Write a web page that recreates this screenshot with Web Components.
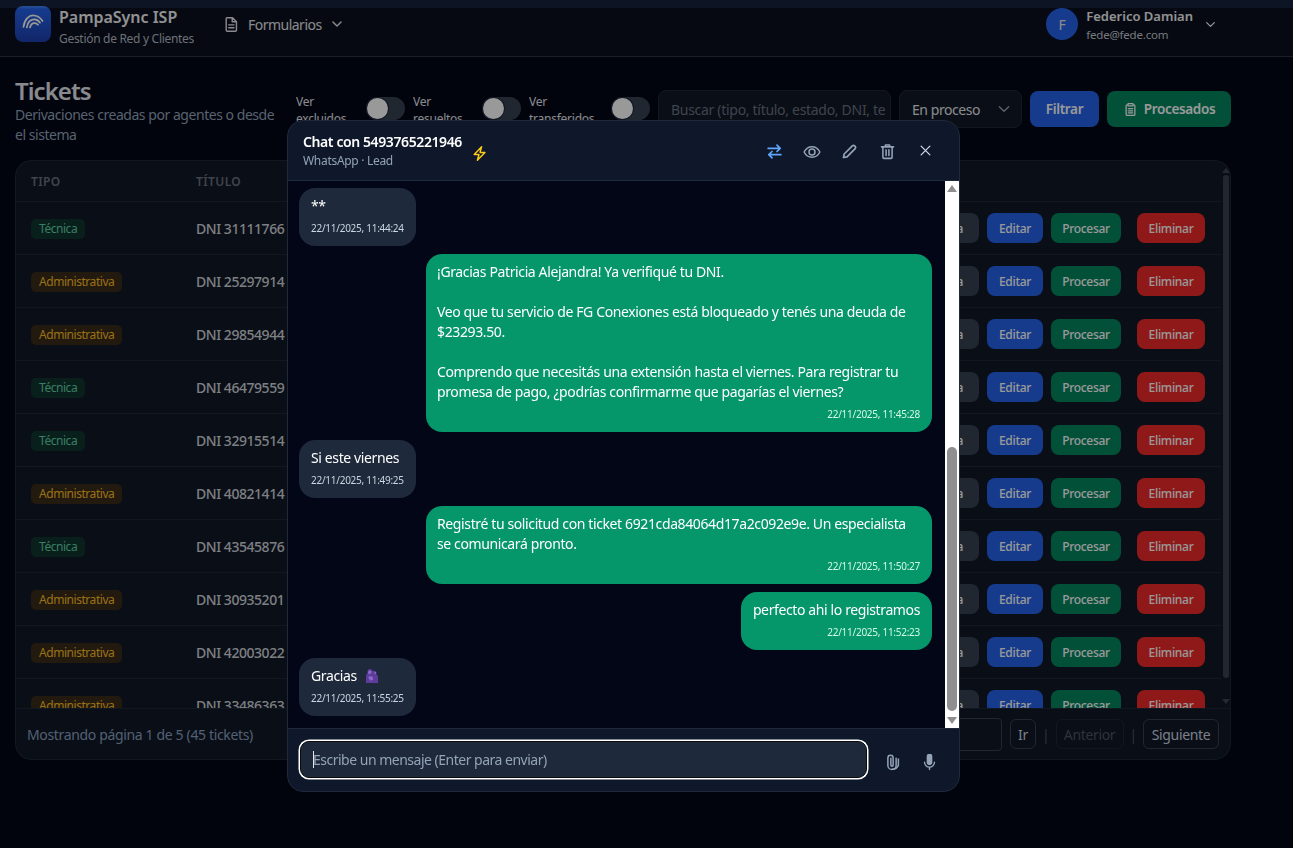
<!DOCTYPE html>
<html lang="es">
<head>
<meta charset="utf-8">
<title>Tickets</title>
<style>
  html, body { margin: 0; height: 100%; background: #020617; overflow: hidden; }
  body { font-family: "Noto Sans", "Open Sans", sans-serif; font-size: 14px; color: #e5e7eb; }
</style>
</head>
<body>
<app-header></app-header>
<tickets-page></tickets-page>
<modal-scrim></modal-scrim>
<chat-modal title="Chat con 5493765221946" subtitle="WhatsApp · Lead">
  <chat-bubble time="22/11/2025, 11:44:24">**</chat-bubble>
  <chat-bubble side="out" wide time="22/11/2025, 11:45:28">¡Gracias Patricia Alejandra! Ya verifiqué tu DNI.<br><br>Veo que tu servicio de FG Conexiones está bloqueado y tenés una deuda de<br>$23293.50.<br><br>Comprendo que necesitás una extensión hasta el viernes. Para registrar tu<br>promesa de pago, ¿podrías confirmarme que pagarías el viernes?</chat-bubble>
  <chat-bubble time="22/11/2025, 11:49:25">Si este viernes</chat-bubble>
  <chat-bubble side="out" wide time="22/11/2025, 11:50:27">Registré tu solicitud con ticket 6921cda84064d17a2c092e9e. Un especialista<br>se comunicará pronto.</chat-bubble>
  <chat-bubble side="out" time="22/11/2025, 11:52:23">perfecto ahi lo registramos</chat-bubble>
  <chat-bubble time="22/11/2025, 11:55:25">Gracias <svg width="13" height="16" viewBox="0 0 13 16" style="vertical-align:-3px;margin-left:5px"><path fill="#5d3c9c" d="M1 15V8c0-1 .5-2 1.500-2.500C2 3 3 1 5 1c1.500 0 2.500 1 2.700 2.200C8.500 2.500 10 2.500 11 3.500c.7.8.7 2 .2 2.800C12.300 7 13 8 13 9v6z"/><path fill="#8a68c8" d="M3 4.500c0-1.200 1-2 2-2s1.500.8 1.500 1.800S5.500 6 4.500 6 3 5.500 3 4.500zM3 9l3-1 2 1.500V12l-3 .5zM9.500 4H11v2H9.500z"/></svg></chat-bubble>
</chat-modal>

<script>
const FONT = '"Noto Sans", "Open Sans", sans-serif';

const icons = {
  doc: '<path d="M6 2.500h7.500L19 8v12a1.500 1.500 0 0 1-1.500 1.500h-11.500A1.500 1.500 0 0 1 4.500 20V4A1.500 1.500 0 0 1 6 2.500zM13 2.500V8h6M8 12.500h7.500M8 16.500h7.500"/>',
  chevron: '<path d="M5 8.500l7 7 7-7"/>',
  clipboard: '<path d="M8 4.500H6.500A1.500 1.500 0 0 0 5 6v14a1.500 1.500 0 0 0 1.500 1.500h11A1.500 1.500 0 0 0 19 20V6a1.500 1.500 0 0 0-1.500-1.500H16M8 2.500h8v3.500H8zM8.500 10.500h7M8.500 14h7M8.500 17.500h7"/>',
  swap: '<path d="M3 7.500h17M15.500 3L20 7.500 15.500 12M21 16.500H4M8.500 12L4 16.500 8.500 21"/>',
  eye: '<path d="M1.500 12C4 7 8 5 12 5s8 2 10.500 7C20 17 16 19 12 19s-8-2-10.500-7z"/><circle cx="12" cy="12" r="4"/>',
  pencil: '<path d="M3.500 20.500l1-5L16 4a2.200 2.200 0 0 1 3.100 0l.9.900a2.200 2.200 0 0 1 0 3.100L8.500 19.500z"/>',
  trash: '<path d="M3.500 5.500h17M9 5V2.800h6V5M5.500 5.500v14.700a1.500 1.500 0 0 0 1.500 1.500h10a1.500 1.500 0 0 0 1.500-1.500V5.500M10 9.500v8M14 9.500v8"/>',
  close: '<path d="M5 5l14 14M19 5L5 19"/>',
  clip: '<path d="M17.500 7v9.500a5.500 5.500 0 0 1-11 0V6.500a3.500 3.500 0 0 1 7 0v9.500a1.500 1.500 0 0 1-3 0V7"/><path d="M20.500 8v8.500a8.500 8.500 0 0 1-8 5"/>',
  mic: '<path fill="currentColor" d="M9 3.500a3 3 0 0 1 6 0v8a3 3 0 0 1-6 0z"/><path d="M5 11.500a7 7 0 0 0 14 0M12 18.500V22"/>',
  bolt: '<path d="M4.500 13.500L15 2.500l-2.300 8h7L9 21.500l2.300-8z"/>'
};

function icon(name, size, width) {
  return `<svg width="${size}" height="${size}" viewBox="0 0 24 24" fill="none" stroke="currentColor" stroke-width="${width || 2}" stroke-linecap="round" stroke-linejoin="round" style="display:block;flex:none">${icons[name]}</svg>`;
}

class AppHeader extends HTMLElement {
  constructor() {
    super();
    this.attachShadow({ mode: 'open' }).innerHTML = `
      <style>
        :host { display: flex; align-items: center; box-sizing: border-box; height: 57px; padding: 0 0 8px 15px;
          background: linear-gradient(#17233f 0 8px, #0a101d 8px); border-bottom: 1px solid #2a3445; color: #f3f4f6; }
        .logo { width: 36px; height: 36px; border-radius: 8px; background: linear-gradient(#3b82f6 0 1px, #2563eb 3px, #1e40af 100%); display: flex; align-items: center; justify-content: center; }
        .brand { margin-left: 8px; padding-top: 5px; }
        .name { font-size: 16px; font-weight: 600; line-height: 22px; letter-spacing: -.02px; }
        .tag { font-size: 12px; line-height: 16px; color: #b4bac4; margin-top: 3px; letter-spacing: -.3px; }
        .nav { display: flex; align-items: center; margin-left: 29px; color: #e5e7eb; }
        .nav span { margin: 0 8px 0 8px; font-size: 14px; letter-spacing: -.52px; }
        .user { margin-left: auto; display: flex; align-items: center; padding-right: 76px; }
        .avatar { width: 32px; height: 32px; border-radius: 50%; background: #2563eb; color: #e5e7eb; display: flex; align-items: center; justify-content: center; font-size: 14px; }
        .who { margin: 4px 11px 0 8px; }
        .who b { display: block; font-size: 13px; font-weight: 600; line-height: 18px; letter-spacing: 0; margin-top: -2px; }
        .who small { display: block; font-size: 11.500px; line-height: 16px; color: #c4c9d1; margin-top: 2px; letter-spacing: -.2px; }
      </style>
      <div class="logo"><svg width="24" height="24" viewBox="0 0 24 24" fill="none" stroke="#fff" stroke-width="1.700" stroke-linecap="round" style="margin-top:-7px"><path d="M2.500 18C3.500 10 8 6 13 6.500c3.500.3 6.500 2.300 8.500 5.500"/><path d="M5.800 18.500C6.500 13 10 10 13.500 10.300c2.500.2 4.300 1.500 5.500 3.400"/><path d="M9 18.500c.7-3 2.800-4.700 5-4.400 1.200.2 2.200.8 3 1.700"/></svg></div>
      <div class="brand"><div class="name">PampaSync ISP</div><div class="tag">Gestión de Red y Clientes</div></div>
      <div class="nav">${icon('doc', 17)}<span>Formularios</span>${icon('chevron', 14, 2.500)}</div>
      <div class="user">
        <div class="avatar">F</div>
        <div class="who"><b>Federico Damian</b><small>fede@fede.com</small></div>
        ${icon('chevron', 13, 2.500)}
      </div>`;
  }
}

class ToggleSwitch extends HTMLElement {
  constructor() {
    super();
    this.attachShadow({ mode: 'open' }).innerHTML = `
      <style>
        :host { display: flex; align-items: flex-start; gap: 8px; }
        .label { font-size: 12px; line-height: 17px; color: #e5e7eb; margin-top: 2.500px; letter-spacing: -.25px; white-space: pre-line; }
        .track { width: 39px; height: 23px; margin-top: 7px; border-radius: 12px; background: #374151; box-sizing: border-box; flex: none; }
        .knob { width: 21px; height: 21px; margin: 1px; border-radius: 50%; background: #fff; box-shadow: 0 0 0 1px #1e293b; }
      </style>
      <div class="label"></div><div class="track"><div class="knob"></div></div>`;
  }
  connectedCallback() {
    const label = this.shadowRoot.querySelector('.label');
    label.textContent = this.getAttribute('label');
    label.style.width = this.getAttribute('w') + 'px';
  }
}

class UiButton extends HTMLElement {
  constructor() {
    super();
    this.attachShadow({ mode: 'open' }).innerHTML = `
      <style>
        :host { display: inline-flex; align-items: center; justify-content: center; gap: 6px; box-sizing: border-box; border-radius: 8px; white-space: nowrap; font-weight: 600; color: #fff; flex: none; }
        :host([kind="blue"]) { background: #2563eb; }
        :host([kind="green"]) { background: #05865f; }
        :host([kind="red"]) { background: #ef2b2b; }
        :host([kind="grey"]) { background: #374151; }
      </style>
      <slot></slot>`;
  }
}

class TicketRow extends HTMLElement {
  constructor() {
    super();
    this.attachShadow({ mode: 'open' }).innerHTML = `
      <style>
        :host { display: flex; align-items: center; flex: none; box-sizing: border-box; height: 53px; padding-left: 15px; border-bottom: 1px solid #1f2937; }
        .tipo { width: 165px; flex: none; }
        .badge { display: inline-block; font-size: 12px; line-height: 20px; padding: 0 8px; border-radius: 5px; letter-spacing: -.45px; vertical-align: middle; }
        .badge.t { background: #0f3530; color: #5fd0a4; }
        .badge.a { background: #3a2a1a; color: #fbbf24; }
        .titulo { font-size: 14px; font-weight: 500; color: #d1d5db; letter-spacing: -.46px; }
        .actions { margin-left: auto; display: flex; align-items: center; padding-right: 16px; }
        ui-button { height: 30px; font-size: 12px; letter-spacing: -.3px; margin-left: 8px; font-weight: 500; }
        .ed { width: 56px; } .pr { width: 70px; } .el { width: 68px; margin-left: 16px; } .fi { width: 60px; }
      </style>
      <div class="tipo"><span class="badge"></span></div>
      <div class="titulo"></div>
      <div class="actions">
        <ui-button class="fi" kind="grey">Ficha</ui-button>
        <ui-button class="ed" kind="blue">Editar</ui-button>
        <ui-button class="pr" kind="green">Procesar</ui-button>
        <ui-button class="el" kind="red">Eliminar</ui-button>
      </div>`;
  }
  connectedCallback() {
    const tipo = this.getAttribute('tipo');
    const badge = this.shadowRoot.querySelector('.badge');
    badge.textContent = tipo;
    badge.classList.add(tipo === 'Técnica' ? 't' : 'a');
    this.shadowRoot.querySelector('.titulo').textContent = this.getAttribute('titulo');
  }
}

class TicketsPage extends HTMLElement {
  constructor() {
    super();
    const rows = [
      ['Técnica', 'DNI 31111766'], ['Administrativa', 'DNI 25297914'], ['Administrativa', 'DNI 29854944'],
      ['Técnica', 'DNI 46479559'], ['Técnica', 'DNI 32915514'], ['Administrativa', 'DNI 40821414'],
      ['Técnica', 'DNI 43545876'], ['Administrativa', 'DNI 30935201'], ['Administrativa', 'DNI 42003022'],
      ['Administrativa', 'DNI 33486363']
    ];
    this.attachShadow({ mode: 'open' }).innerHTML = `
      <style>
        :host { display: block; padding: 0 62px 0 15px; height: 791px; box-sizing: border-box; }
        .top { display: flex; align-items: flex-start; height: 104px; box-sizing: border-box; padding-top: 21px; }
        .head { width: 281px; flex: none; }
        h1 { margin: 0; font-size: 24px; line-height: 26px; font-weight: 600; color: #e5e7eb; letter-spacing: -.95px; }
        .sub { font-size: 14px; line-height: 20px; color: #94a3b8; margin-top: 1px; width: 272px; letter-spacing: -.46px; }
        .tools { display: flex; align-items: flex-start; height: 38px; margin-top: 12px; }
        toggle-switch { margin-right: 8px; height: 38px; overflow: hidden; }
        .field { box-sizing: border-box; height: 38px; border: 1px solid #1f2937; border-radius: 8px; background: #111827; font-size: 14px; letter-spacing: -.3px; display: flex; align-items: center; overflow: hidden; white-space: nowrap; flex: none; }
        .search { width: 233px; color: #6b7280; padding: 0 3px 0 12px; }
        .search span { display: block; overflow: hidden; }
        .select { width: 123px; margin-left: 8px; color: #e5e7eb; padding: 0 9px 0 12px; justify-content: space-between; letter-spacing: -.45px; }
        .select svg { color: #9ca3af; }
        .filtrar { width: 69px; height: 36px; margin: 1px 0 0 8px; font-size: 13.500px; letter-spacing: -.35px; }
        .proc { width: 124px; height: 36px; margin: 1px 0 0 8px; font-size: 13.500px; letter-spacing: -.35px; }
        .card { box-sizing: border-box; height: 600px; margin-top: -1px; width: 1216px; border: 1px solid #1f2937; border-radius: 16px; background: #111827; display: flex; flex-direction: column; overflow: hidden; }
        .scroll { flex: 1; min-height: 0; display: flex; }
        .tbl { flex: 1; min-width: 0; display: flex; flex-direction: column; overflow: hidden; }
        .thead { display: flex; align-items: center; flex: none; height: 41px; box-sizing: border-box; padding-left: 15px; border-bottom: 1px solid #1f2937; font-size: 12px; font-weight: 600; letter-spacing: .4px; color: #6b7280; }
        .thead div:first-child { width: 165px; }
        .bar { width: 9px; flex: none; display: flex; flex-direction: column; align-items: center; padding-top: 7px; }
        .up, .down { width: 0; height: 0; border: 4px solid transparent; border-top: 0; border-bottom: 5px solid #3f4650; flex: none; }
        .down { border-bottom: 0; border-top: 5px solid #3f4650; margin-top: auto; margin-bottom: 4px; }
        .thumb { width: 6px; height: 503px; margin-top: 2px; border-radius: 3px; background: #3a414c; flex: none; }
        .foot { flex: none; height: 51px; box-sizing: border-box; display: flex; align-items: center; padding: 0 11px; border-top: 1px solid #1f2937; font-size: 14px; letter-spacing: -.35px; color: #8aa0c0; }
        .pager { margin-left: auto; display: flex; align-items: center; }
        .pg { box-sizing: border-box; border: 1px solid #374151; border-radius: 6px; height: 30px; display: flex; align-items: center; justify-content: center; color: #cbd5e1; }
        .num { width: 60px; height: 33px; border-radius: 4px; margin-right: 8px; }
        .ir { width: 26px; } .ant { width: 68px; color: #4b5563; border-color: #1f2937; } .sig { width: 76px; }
        .sep { color: #4b5563; width: 19.500px; text-align: center; font-size: 14px; }
      </style>
      <div class="top">
        <div class="head">
          <h1>Tickets</h1>
          <div class="sub">Derivaciones creadas por agentes o desde el sistema</div>
        </div>
        <div class="tools">
          <toggle-switch label="Ver\nexcluidos" w="62"></toggle-switch>
          <toggle-switch label="Ver\nresueltos" w="61"></toggle-switch>
          <toggle-switch label="Ver\ntransferidos" w="74"></toggle-switch>
          <div class="field search"><span>Buscar (tipo, título, estado, DNI, te</span></div>
          <div class="field select"><span>En proceso</span>${icon('chevron', 16, 2)}</div>
          <ui-button class="filtrar" kind="blue">Filtrar</ui-button>
          <ui-button class="proc" kind="green">${icon('clipboard', 15)}Procesados</ui-button>
        </div>
      </div>
      <div class="card">
        <div class="scroll">
          <div class="tbl">
            <div class="thead"><div>TIPO</div><div>TÍTULO</div></div>
            ${rows.map(r => `<ticket-row tipo="${r[0]}" titulo="${r[1]}"></ticket-row>`).join('')}
          </div>
          <div class="bar"><div class="up"></div><div class="thumb"></div><div class="down"></div></div>
        </div>
        <div class="foot">
          <div>Mostrando página 1 de 5 (45 tickets)</div>
          <div class="pager">
            <div class="pg num"></div>
            <div class="pg ir">Ir</div><span class="sep">|</span>
            <div class="pg ant">Anterior</div><span class="sep">|</span>
            <div class="pg sig">Siguiente</div>
          </div>
        </div>
      </div>`;
  }
}

class ModalScrim extends HTMLElement {
  constructor() {
    super();
    this.attachShadow({ mode: 'open' }).innerHTML = `
      <style>:host { display: block; position: fixed; inset: 0; background: rgba(0, 0, 0, .4); }</style>`;
  }
}

class ChatBubble extends HTMLElement {
  constructor() {
    super();
    this.attachShadow({ mode: 'open' }).innerHTML = `
      <style>
        :host { display: block; align-self: flex-start; box-sizing: border-box; flex: none; padding: 8px 12px 11px; border-radius: 16px; background: #1e293b; color: #fff; font-size: 14px; line-height: 20px; letter-spacing: -.38px; white-space: nowrap; }
        :host([side="out"]) { align-self: flex-end; background: #059669; }
        :host([wide]) { width: 506px; padding-left: 11px; }
        .time { font-size: 10px; line-height: 14px; margin-top: 5px; color: #cbd5e1; letter-spacing: -.27px; }
        :host([side="out"]) .time { text-align: right; color: #d1fae5; }
      </style>
      <slot></slot><div class="time"></div>`;
  }
  connectedCallback() {
    this.shadowRoot.querySelector('.time').textContent = this.getAttribute('time');
  }
}

class ChatModal extends HTMLElement {
  constructor() {
    super();
    this.attachShadow({ mode: 'open' }).innerHTML = `
      <style>
        :host { display: flex; flex-direction: column; position: fixed; left: 287px; top: 120px; width: 673px; height: 672px; box-sizing: border-box; border: 1px solid #1e293b; border-radius: 16px; background: #0f172a; overflow: hidden; font-family: ${FONT}; }
        header { flex: none; height: 60px; box-sizing: border-box; display: flex; align-items: center; padding: 0 15px; border-bottom: 1px solid #1e293b; }
        .title { font-size: 14px; font-weight: 600; line-height: 20px; color: #fff; letter-spacing: -.4px; margin-top: -1px; }
        .sub { font-size: 12px; line-height: 16px; color: #94a3b8; letter-spacing: -.3px; margin-top: 1px; }
        .bolt { color: #facc15; margin-left: 9px; margin-top: 5px; }
        .btns { margin-left: auto; margin-top: 3px; display: flex; color: #94a3b8; }
        .btns div { width: 37.750px; display: flex; justify-content: center; }
        .btns .swap { color: #60a5fa; }
        .btns .x { color: #cbd5e1; }
        .body { flex: 1; min-height: 0; display: flex; background: #020617; }
        .list { flex: 1; min-width: 0; display: flex; flex-direction: column; gap: 8px; padding: 7px 13px 7px 11px; box-sizing: border-box; overflow: hidden; }
        .sb { width: 14px; flex: none; background: #fff; display: flex; flex-direction: column; align-items: center; padding: 4px 0; box-sizing: border-box; }
        .up, .down { width: 0; height: 0; border: 5.500px solid transparent; border-top: 0; border-bottom: 7px solid #8f8f8f; flex: none; }
        .down { border-bottom: 0; border-top: 7px solid #8f8f8f; }
        .thumb { width: 10px; height: 264px; border-radius: 5px; background: #8f8f8f; margin-top: auto; margin-bottom: 6px; }
        footer { flex: none; height: 63px; box-sizing: border-box; display: flex; align-items: center; padding: 0 0 0 11.500px; border-top: 1px solid #1e293b; }
        .input { width: 567px; height: 37px; margin-bottom: 2px; box-sizing: border-box; flex: none; border: 1px solid #0b0b0b; border-radius: 9px; background: #1e293b; box-shadow: 0 0 0 1.500px #fff; color: #94a3b8; font-size: 14px; letter-spacing: -.5px; display: flex; align-items: center; padding-left: 12.500px; }
        .caret { width: 1px; height: 17px; background: #e5e7eb; margin-right: -1px; flex: none; }
        .act { width: 38px; margin-top: 4px; display: flex; justify-content: center; color: #94a3b8; }
      </style>
      <header>
        <div><div class="title"></div><div class="sub"></div></div>
        <div class="bolt">${icon('bolt', 17)}</div>
        <div class="btns">
          <div class="swap">${icon('swap', 17, 2.400)}</div>
          <div>${icon('eye', 18, 2)}</div>
          <div>${icon('pencil', 17, 2.400)}</div>
          <div>${icon('trash', 17, 2.200)}</div>
          <div class="x">${icon('close', 15, 2)}</div>
        </div>
      </header>
      <div class="body">
        <div class="list"><slot></slot></div>
        <div class="sb"><div class="up"></div><div class="thumb"></div><div class="down"></div></div>
      </div>
      <footer>
        <div class="input"><span class="caret"></span><span>Escribe un mensaje (Enter para enviar)</span></div>
        <div class="act" style="margin-left:6px">${icon('clip', 18, 2)}</div>
        <div class="act">${icon('mic', 17, 2)}</div>
      </footer>`;
  }
  connectedCallback() {
    this.shadowRoot.querySelector('.title').textContent = this.getAttribute('title');
    this.shadowRoot.querySelector('.sub').textContent = this.getAttribute('subtitle');
  }
}

customElements.define('app-header', AppHeader);
customElements.define('toggle-switch', ToggleSwitch);
customElements.define('ui-button', UiButton);
customElements.define('ticket-row', TicketRow);
customElements.define('tickets-page', TicketsPage);
customElements.define('modal-scrim', ModalScrim);
customElements.define('chat-bubble', ChatBubble);
customElements.define('chat-modal', ChatModal);
</script>
</body>
</html>
